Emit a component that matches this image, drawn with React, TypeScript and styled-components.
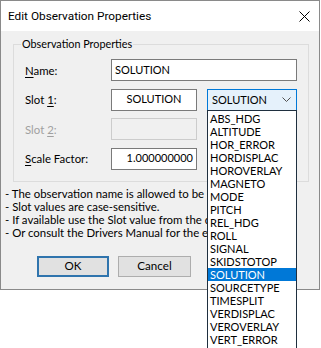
import styled, { createGlobalStyle } from "styled-components";

const GlobalStyle = createGlobalStyle`
  html, body {
    margin: 0;
    padding: 0;
    background: #ffffff;
  }
  body {
    font-family: Lato, "Liberation Sans", Arial, sans-serif;
    color: #000000;
  }
`;

const Screen = styled.div`
  position: relative;
  width: 321px;
  height: 348px;
  overflow: hidden;
  background: #ffffff;
`;

const Dialog = styled.div`
  width: 320px;
  height: 290px;
  box-sizing: border-box;
  border: 1px solid #8a8a8a;
  background: #f0f0f0;
  display: flex;
  flex-direction: column;
`;

const TitleBar = styled.div`
  height: 30px;
  flex: none;
  background: #ffffff;
  display: flex;
  align-items: center;
  justify-content: space-between;
  padding: 0 9px 0 7px;
`;

const Title = styled.span`
  font-family: Roboto, "Liberation Sans", sans-serif;
  font-size: 11.8px;
  color: #000000;
`;

const Body = styled.div`
  padding: 6px 12px 0 12px;
  display: flex;
  flex-direction: column;
`;

const GroupBox = styled.fieldset`
  margin: 0;
  width: 293px;
  box-sizing: border-box;
  border: 1px solid #dcdcdc;
  padding: 0 11px 11px 11px;
`;

const Legend = styled.legend`
  margin-left: -4px;
  padding: 0 1px;
  font-size: 10.8px;
  line-height: 14px;
`;

const FieldGrid = styled.div`
  margin-top: 8px;
  display: grid;
  grid-template-columns: 76px 86px 90px;
  grid-auto-rows: 22px;
  column-gap: 10px;
  row-gap: 7.5px;
`;

const Label = styled.label<{ $disabled?: boolean }>`
  align-self: center;
  font-size: 11.4px;
  white-space: nowrap;
  color: ${(p) => (p.$disabled ? "#a0a0a0" : "#000000")};
  u {
    text-decoration-thickness: 1px;
    text-underline-offset: 2px;
  }
`;

const TextBox = styled.div<{ $align?: "left" | "center" | "right"; $disabled?: boolean; $wide?: boolean }>`
  grid-column: ${(p) => (p.$wide ? "2 / 4" : "auto")};
  box-sizing: border-box;
  border: 1px solid ${(p) => (p.$disabled ? "#cccccc" : "#7a7a7a")};
  background: ${(p) => (p.$disabled ? "#f0f0f0" : "#ffffff")};
  font-size: 11px;
  display: flex;
  align-items: center;
  justify-content: ${(p) =>
    p.$align === "center" ? "center" : p.$align === "right" ? "flex-end" : "flex-start"};
  padding: 0 3px 2px 3px;
`;

const Combo = styled.div`
  box-sizing: border-box;
  border: 1px solid #0078d7;
  background: #e5f1fb;
  font-size: 11px;
  display: flex;
  align-items: center;
  justify-content: space-between;
  padding: 0 5px 1px 4px;
`;

const Notes = styled.div`
  margin-top: 5px;
  margin-left: -8px;
  font-size: 11.4px;
  line-height: 13px;
  white-space: nowrap;
`;

const ButtonRow = styled.div`
  margin-top: 17px;
  margin-left: 24px;
  display: flex;
  gap: 9px;
`;

const Button = styled.button<{ $default?: boolean }>`
  width: ${(p) => (p.$default ? "72px" : "73px")};
  height: 21px;
  box-sizing: border-box;
  margin: 0;
  padding: 0 0 1px;
  background: #e1e1e1;
  border: ${(p) => (p.$default ? "2px solid #2f74ad" : "1px solid #adadad")};
  font-family: inherit;
  font-size: 11.6px;
  color: #000000;
`;

const DropList = styled.ul`
  position: absolute;
  left: 207px;
  top: 110px;
  width: 90px;
  box-sizing: border-box;
  margin: 0;
  padding: 1px 0 20px;
  list-style: none;
  background: #ffffff;
  border: 1px solid #1f2f3f;
`;

const DropItem = styled.li<{ $selected?: boolean }>`
  height: 13px;
  line-height: 13px;
  padding-left: 2px;
  font-size: 11px;
  background: ${(p) => (p.$selected ? "#0078d7" : "transparent")};
  color: ${(p) => (p.$selected ? "#ffffff" : "#000000")};
`;

const slots = [
  "ABS_HDG",
  "ALTITUDE",
  "HOR_ERROR",
  "HORDISPLAC",
  "HOROVERLAY",
  "MAGNETO",
  "MODE",
  "PITCH",
  "REL_HDG",
  "ROLL",
  "SIGNAL",
  "SKIDSTOTOP",
  "SOLUTION",
  "SOURCETYPE",
  "TIMESPLIT",
  "VERDISPLAC",
  "VEROVERLAY",
  "VERT_ERROR",
];

function CloseIcon() {
  return (
    <svg width="11" height="11" viewBox="0 0 11 11">
      <path d="M0.5 0.5 L10.5 10.5 M10.5 0.5 L0.5 10.5" stroke="#000" strokeWidth="1" fill="none" />
    </svg>
  );
}

function Chevron() {
  return (
    <svg width="9" height="5" viewBox="0 0 9 5">
      <path d="M0.5 0.5 L4.5 4.5 L8.5 0.5" stroke="#505050" strokeWidth="1" fill="none" />
    </svg>
  );
}

function App() {
  const selected = "SOLUTION";
  return (
    <Screen>
      <GlobalStyle />
      <Dialog>
        <TitleBar>
          <Title>Edit Observation Properties</Title>
          <CloseIcon />
        </TitleBar>
        <Body>
          <GroupBox>
            <Legend>Observation Properties</Legend>
            <FieldGrid>
              <Label>
                <u>N</u>ame:
              </Label>
              <TextBox $wide>SOLUTION</TextBox>
              <Label>
                Slot <u>1</u>:
              </Label>
              <TextBox $align="center">{selected}</TextBox>
              <Combo>
                <span>{selected}</span>
                <Chevron />
              </Combo>
              <Label $disabled>
                Slot <u>2</u>:
              </Label>
              <TextBox $disabled />
              <span />
              <Label>
                <u>S</u>cale Factor:
              </Label>
              <TextBox $align="right">1.000000000</TextBox>
              <span />
            </FieldGrid>
          </GroupBox>
          <Notes>
            <div>- The observation name is allowed to be 1 to 8 long.</div>
            <div>- Slot values are case-sensitive.</div>
            <div>- If available use the Slot value from the drivers.</div>
            <div>- Or consult the Drivers Manual for the exact slot.</div>
          </Notes>
          <ButtonRow>
            <Button $default>OK</Button>
            <Button>Cancel</Button>
          </ButtonRow>
        </Body>
      </Dialog>
      <DropList>
        {slots.map((s) => (
          <DropItem key={s} $selected={s === selected}>
            {s}
          </DropItem>
        ))}
      </DropList>
    </Screen>
  );
}

export default App;
